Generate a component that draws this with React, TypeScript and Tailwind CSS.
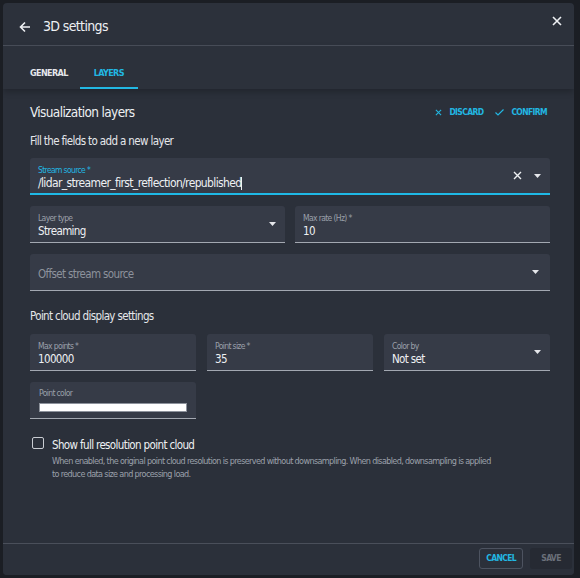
import { FC } from 'react';

const font = '[font-family:"DejaVu_Sans_Condensed",Roboto,sans-serif] tracking-[-0.04em]';

const Caret: FC<{}> = () =>
(
    <svg width="7" height="4" viewBox="0 0 7 4" className="shrink-0"><path d="M0 0h7L3.5 4z" fill="#e5e7eb" /></svg>
);

const Field: FC<{ label?: string; value?: string; placeholder?: string; select?: boolean; className?: string }> = ({ label, value, placeholder, select = false, className = '' }) =>
{
    return (
        <div className={ `flex items-center h-[37px] bg-[#363b47] rounded-t-[3px] border-b border-[#a3a8b1] pl-[8px] pr-[9px] ${ className }` }>
            <div className="flex flex-col flex-1 min-w-0 pt-[3px]">
                { label && <span className="text-[8.5px] leading-[10px] text-[#9ba0aa]">{ label }</span> }
                { value && <span className="text-[11.5px] leading-[16px] text-[#eef0f3]">{ value }</span> }
                { placeholder && <span className="text-[11.5px] leading-[16px] text-[#8d929c]">{ placeholder }</span> }
            </div>
            { select && <Caret /> }
        </div>
    );
};

export default function App()
{
    return (
        <div className={ `w-[580px] h-[578px] bg-[#1b1e24] p-[3px] pr-[6px] ${ font }` }>
            <div className="flex flex-col h-full bg-[#2c313b] rounded-[4px] overflow-hidden">
                { /* Header */ }
                <div className="flex items-center h-[43px] pl-[16px] pr-[12px] pt-[5px] border-b border-[#4a4f5a]">
                    <svg width="12" height="12" viewBox="0 0 12 12" className="mr-[12px]"><path d="M11 6H1.5M6 1.5L1.5 6 6 10.5" stroke="#eef0f3" strokeWidth="1.6" fill="none" /></svg>
                    <span className="text-[14px] text-[#eef0f3]">3D settings</span>
                    <svg width="10" height="10" viewBox="0 0 10 10" className="ml-auto -mt-[11px]"><path d="M1 1l8 8M9 1L1 9" stroke="#eef0f3" strokeWidth="1.6" /></svg>
                </div>

                { /* Tabs */ }
                <div className="flex items-end h-[43px] px-[24px] gap-[9px] shadow-[0_3px_6px_rgba(0,0,0,0.22)] relative z-10">
                    <div className="px-[3px] pb-[8px] text-[9px] leading-[12px] font-bold text-[#e5e7eb] border-b-2 border-transparent">GENERAL</div>
                    <div className="px-[14px] pb-[8px] text-[9px] leading-[12px] font-bold text-[#22b7e2] border-b-2 border-[#22b7e2]">LAYERS</div>
                </div>

                { /* Content */ }
                <div className="flex-1 flex flex-col pl-[27px] pr-[24px] pt-[12px] bg-[#2b303a]">
                    <div className="flex items-center h-[22px]">
                        <span className="text-[13.5px] text-[#eef0f3]">Visualization layers</span>
                        <div className="ml-auto flex items-center gap-[12px] pr-[3px] text-[8.5px] font-bold text-[#22b7e2]">
                            <span className="flex items-center gap-[7px]">
                                <svg width="7" height="7" viewBox="0 0 8 8"><path d="M1 1l6 6M7 1L1 7" stroke="#22b7e2" strokeWidth="1.2" /></svg>
                                DISCARD
                            </span>
                            <span className="flex items-center gap-[7px]">
                                <svg width="9" height="7" viewBox="0 0 9 7"><path d="M0.5 3.5l2.5 2.5 5.5-5.5" stroke="#22b7e2" strokeWidth="1.2" fill="none" /></svg>
                                CONFIRM
                            </span>
                        </div>
                    </div>
                    <div className="mt-[11px] text-[11.5px] leading-[15px] text-[#e5e7eb]">Fill the fields to add a new layer</div>

                    <div className="flex items-center mt-[9px] h-[37px] bg-[#363b47] rounded-t-[3px] border-b-2 border-[#1fb9e6] pl-[8px] pr-[9px]">
                        <div className="flex flex-col flex-1 min-w-0 pt-[5px]">
                            <span className="text-[8.5px] leading-[10px] text-[#22b7e2]">Stream source *</span>
                            <span className="text-[12px] leading-[16px] text-[#eef0f3]">/lidar_streamer_first_reflection/republished<span className="inline-block w-px h-[13px] bg-[#eef0f3] align-middle" /></span>
                        </div>
                        <svg width="9" height="9" viewBox="0 0 9 9" className="mr-[12px]"><path d="M1 1l7 7M8 1L1 8" stroke="#eef0f3" strokeWidth="1.4" /></svg>
                        <Caret />
                    </div>

                    <div className="grid grid-cols-2 gap-[10px] mt-[11px]">
                        <Field label="Layer type" value="Streaming" select />
                        <Field label="Max rate (Hz) *" value="10" />
                    </div>
                    <Field className="mt-[11px] pr-[11px]" placeholder="Offset stream source" select />

                    <div className="mt-[18px] text-[11.5px] leading-[15px] text-[#e5e7eb]">Point cloud display settings</div>
                    <div className="grid grid-cols-3 gap-[11px] mt-[10px]">
                        <Field label="Max points *" value="100000" />
                        <Field label="Point size *" value="35" />
                        <Field label="Color by" value="Not set" select />
                    </div>
                    <div className="grid grid-cols-3 gap-[11px] mt-[11px]">
                        <div className="flex flex-col h-[37px] bg-[#363b47] rounded-t-[3px] border-b border-[#a3a8b1] px-[9px] pt-[6px]">
                            <span className="text-[8.5px] leading-[10px] text-[#9ba0aa]">Point color</span>
                            <div className="mt-[5px] h-[9px] bg-white border border-[#8d929c]" />
                        </div>
                    </div>

                    <div className="flex items-start mt-[17px] pl-[2px]">
                        <div className="w-[12px] h-[12px] border border-[#c9ccd2] rounded-[2px] mt-[1px] mr-[8px] shrink-0" />
                        <div className="flex flex-col pt-[2px]">
                            <span className="text-[11.5px] leading-[14px] text-[#eef0f3]">Show full resolution point cloud</span>
                            <span className="text-[9px] leading-[13px] text-[#9ba0aa] mt-[3px]">
                                When enabled, the original point cloud resolution is preserved without downsampling. When disabled, downsampling is applied<br />
                                to reduce data size and processing load.
                            </span>
                        </div>
                    </div>
                </div>

                { /* Footer */ }
                <div className="flex items-center justify-end gap-[7px] h-[32px] border-t border-[#4a4f5a] pr-[2px] pb-[2px] bg-[#2b303a]">
                    <button className="h-[21px] px-[6px] rounded-[3px] border border-[#4d5360] text-[8.5px] font-bold text-[#22b7e2]">CANCEL</button>
                    <button className="h-[21px] w-[42px] rounded-[3px] bg-[#262a33] text-[8.5px] font-bold text-[#6b707a]">SAVE</button>
                </div>
            </div>
        </div>
    );
}
